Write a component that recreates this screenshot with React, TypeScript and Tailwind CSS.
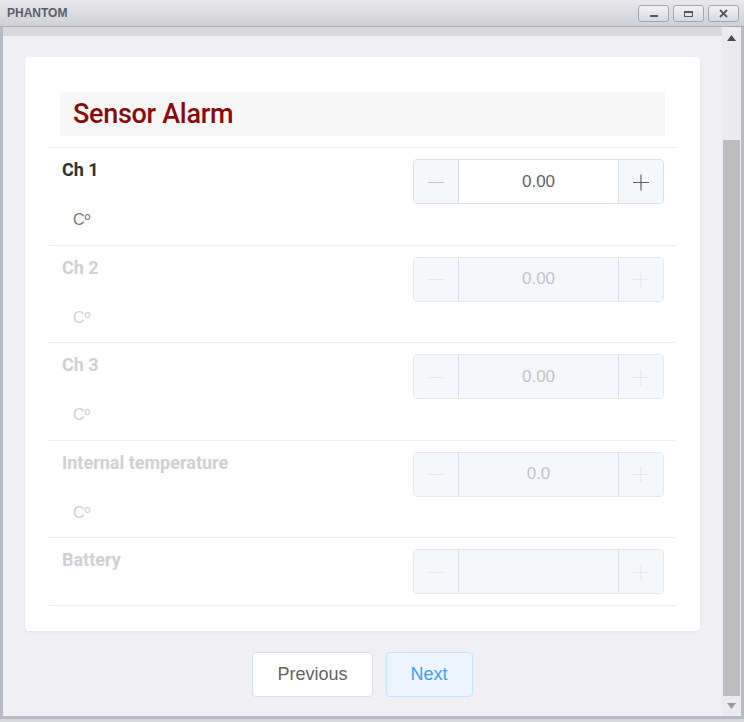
import React from 'react';

const rows = [
  { label: 'Ch 1', value: '0.00', unit: 'Cº', enabled: true },
  { label: 'Ch 2', value: '0.00', unit: 'Cº', enabled: false },
  { label: 'Ch 3', value: '0.00', unit: 'Cº', enabled: false },
  { label: 'Internal temperature', value: '0.0', unit: 'Cº', enabled: false },
  { label: 'Battery', value: '', unit: '', enabled: false },
];

const Minus = ({ color }: { color: string }) => (
  <svg width="18" height="18" viewBox="0 0 18 18">
    <path d="M1 9.5h16" stroke={color} strokeWidth="1.2" />
  </svg>
);

const Plus = ({ color }: { color: string }) => (
  <svg width="18" height="18" viewBox="0 0 18 18">
    <path d="M1 9.5h16M9 1.5v16" stroke={color} strokeWidth="1.2" />
  </svg>
);

const Stepper = ({ value, enabled }: { value: string; enabled: boolean }) => (
  <div
    className={`flex w-[251px] h-[45px] rounded-[4px] border overflow-hidden ${
      enabled ? 'border-[#dcdfe6]' : 'border-[#e4e7ed]'
    }`}
  >
    <div className="w-[45px] shrink-0 bg-[#f5f7fa] border-r border-[#dcdfe6] flex items-center justify-center">
      <Minus color={enabled ? '#c0c4cc' : '#e4e7ed'} />
    </div>
    <div
      className={`flex-1 flex items-center justify-center text-[17px] font-['Liberation_Sans',Arial,sans-serif] ${
        enabled ? 'bg-white text-[#606266]' : 'bg-[#f5f7fa] text-[#c0c4cc]'
      }`}
    >
      {value}
    </div>
    <div className="w-[45px] shrink-0 bg-[#f5f7fa] border-l border-[#dcdfe6] flex items-center justify-center">
      <Plus color={enabled ? '#606266' : '#e4e7ed'} />
    </div>
  </div>
);

const TitleButton = ({ children }: { children: React.ReactNode }) => (
  <div className="w-[31px] h-[17px] rounded-[3px] border border-[#a4a6ae] bg-gradient-to-b from-[#f4f4f6] to-[#d8d9de] flex items-center justify-center">
    {children}
  </div>
);

export default function App() {
  return (
    <div className="w-[744px] h-[722px] flex flex-col bg-[#d6d7dc] overflow-hidden font-['Roboto',sans-serif]">
      {/* title bar */}
      <div className="h-[27px] shrink-0 flex items-center justify-between pl-[7px] pr-[5px] bg-gradient-to-b from-[#e9e9ec] to-[#d0d1d6] border-b border-[#a9aab2]">
        <span className="text-[12px] font-bold text-[#5a5e6b] font-['Liberation_Sans',Arial,sans-serif]">
          PHANTOM
        </span>
        <div className="flex gap-[4px] pt-[1px]">
          <TitleButton>
            <div className="w-[8px] h-[2px] bg-[#55575f] mt-[5px]" />
          </TitleButton>
          <TitleButton>
            <div className="w-[9px] h-[6px] border-[1.5px] border-t-[2.5px] border-[#55575f]" />
          </TitleButton>
          <TitleButton>
            <svg width="9" height="9" viewBox="0 0 9 9">
              <path d="M1 1l7 7M8 1L1 8" stroke="#55575f" strokeWidth="1.8" />
            </svg>
          </TitleButton>
        </div>
      </div>

      {/* window body */}
      <div className="flex-1 flex border-l-[3px] border-r-[3px] border-b-[3px] border-[#b9bac2] mb-[3px]">
        <div className="flex-1 flex flex-col bg-[#efeff4]">
          <div className="h-[9px] shrink-0 bg-[#d9d9db]" />
          <div className="flex-1 flex flex-col px-[22px] pt-[21px]">
            {/* card */}
            <div className="bg-white rounded-[4px] shadow-[0_1px_3px_rgba(0,0,0,0.06)] px-[24px] pt-[35px] pb-[25px]">
              <div className="mx-[11px] mb-[11px] h-[44px] bg-[#f7f7f8] flex items-center px-[13px]">
                <h1 className="text-[27px] font-medium text-[#880b0b] tracking-[-0.3px]">Sensor Alarm</h1>
              </div>
              <div className="border-b border-[#ebeef5]">
                {rows.map((r) => (
                  <div key={r.label} className="border-t border-[#ebeef5] flex justify-between pl-[13px] pr-[12px] pt-[11px] pb-[11px]">
                    <div className="flex flex-col">
                      <span
                        className={`text-[18px] leading-[22px] font-bold ${
                          r.enabled ? 'text-[#303133]' : 'text-[#cfd0d3]'
                        }`}
                      >
                        {r.label}
                      </span>
                      {r.unit && (
                        <span
                          className={`mt-[28px] mb-[2.5px] ml-[11px] text-[16px] leading-[22px] font-['Liberation_Sans',Arial,sans-serif] ${
                            r.enabled ? 'text-[#7a7a7a]' : 'text-[#d0d0d2]'
                          }`}
                        >
                          {r.unit}
                        </span>
                      )}
                    </div>
                    <Stepper value={r.value} enabled={r.enabled} />
                  </div>
                ))}
              </div>
            </div>

            {/* footer buttons */}
            <div className="flex justify-center gap-[13px] pt-[21px]">
              <button className="h-[45px] px-[24px] rounded-[4px] border border-[#dcdfe6] bg-white text-[18px] text-[#606266] font-['Liberation_Sans',Arial,sans-serif]">
                Previous
              </button>
              <button className="h-[45px] px-[24px] rounded-[4px] border border-[#c6e2ff] bg-[#ecf5ff] text-[18px] text-[#409eff] font-['Liberation_Sans',Arial,sans-serif]">
                Next
              </button>
            </div>
          </div>
        </div>

        {/* scrollbar */}
        <div className="w-[19px] shrink-0 bg-[#ececf0] flex flex-col items-center">
          <div className="h-[22px] flex items-center justify-center">
            <svg width="9" height="6" viewBox="0 0 9 6">
              <path d="M0 6L4.5 0 9 6z" fill="#4a4a4a" />
            </svg>
          </div>
          <div className="h-[91px]" />
          <div className="w-[17px] flex-1 bg-[#bdbdbd]" />
          <div className="h-[20px] flex items-center justify-center">
            <svg width="9" height="6" viewBox="0 0 9 6">
              <path d="M0 0L4.5 6 9 0z" fill="#9a9a9a" />
            </svg>
          </div>
        </div>
      </div>
    </div>
  );
}
